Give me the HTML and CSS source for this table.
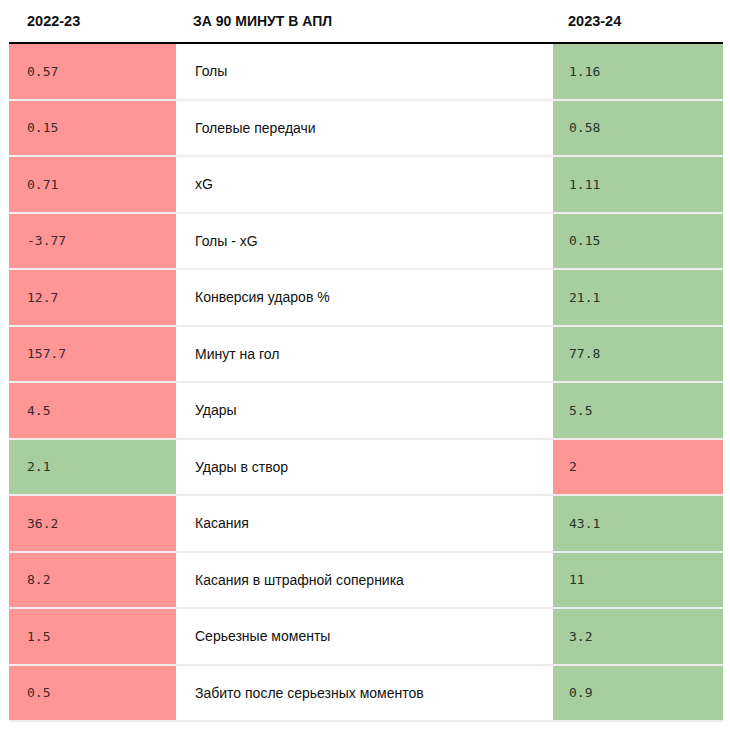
FILE: index.html
```html
<!DOCTYPE html>
<html lang="ru">
<head>
<meta charset="utf-8">
<link rel="stylesheet" href="styles.css">
</head>
<body>
<div class="wrap">
<table class="stats">
  <colgroup>
    <col class="c-left">
    <col class="c-mid">
    <col class="c-right">
  </colgroup>
  <thead>
    <tr>
      <th>2022-23</th>
      <th>ЗА 90 МИНУТ В АПЛ</th>
      <th>2023-24</th>
    </tr>
  </thead>
  <tbody>
    <tr><td class="num bad">0.57</td><td class="lbl">Голы</td><td class="num good">1.16</td></tr>
    <tr><td class="num bad">0.15</td><td class="lbl">Голевые передачи</td><td class="num good">0.58</td></tr>
    <tr><td class="num bad">0.71</td><td class="lbl">xG</td><td class="num good">1.11</td></tr>
    <tr><td class="num bad">-3.77</td><td class="lbl">Голы - xG</td><td class="num good">0.15</td></tr>
    <tr><td class="num bad">12.7</td><td class="lbl">Конверсия ударов %</td><td class="num good">21.1</td></tr>
    <tr><td class="num bad">157.7</td><td class="lbl">Минут на гол</td><td class="num good">77.8</td></tr>
    <tr><td class="num bad">4.5</td><td class="lbl">Удары</td><td class="num good">5.5</td></tr>
    <tr><td class="num good">2.1</td><td class="lbl">Удары в створ</td><td class="num bad">2</td></tr>
    <tr><td class="num bad">36.2</td><td class="lbl">Касания</td><td class="num good">43.1</td></tr>
    <tr><td class="num bad">8.2</td><td class="lbl">Касания в штрафной соперника</td><td class="num good">11</td></tr>
    <tr><td class="num bad">1.5</td><td class="lbl">Серьезные моменты</td><td class="num good">3.2</td></tr>
    <tr><td class="num bad">0.5</td><td class="lbl">Забито после серьезных моментов</td><td class="num good">0.9</td></tr>
  </tbody>
</table>
</div>
</body>
</html>
```

FILE: styles.css
```css
html, body {
  margin: 0;
  padding: 0;
  background: #fff;
}

.wrap {
  padding-left: 9px;
}

.stats {
  width: 714px;
  border-collapse: collapse;
  table-layout: fixed;
  font-family: "Liberation Sans", Arial, sans-serif;
  color: #111;
}

.c-left { width: 167px; }
.c-mid { width: 377px; }
.c-right { width: 170px; }

.stats th {
  height: 42px;
  padding: 0 0 0 18px;
  text-align: left;
  vertical-align: middle;
  font-size: 14.5px;
  font-weight: bold;
  color: #111;
  border-bottom: 2px solid #000;
}

.stats th:nth-child(2) {
  padding-left: 17px;
  font-size: 14px;
}

.stats th:nth-child(3) {
  padding-left: 15px;
}

.stats td {
  box-sizing: border-box;
  height: 56.5px;
  padding: 0 0 0 18px;
  vertical-align: middle;
  border-bottom: 2px solid #ededed;
}

.stats td:nth-child(3) {
  padding-left: 16px;
}

.stats td.num {
  font-family: "DejaVu Sans Mono", "Liberation Mono", monospace;
  font-size: 13px;
  color: #3a2a2a;
}

.stats td.lbl {
  font-size: 14px;
  color: #111;
  padding-left: 19px;
}

.bad {
  background: #ff9696;
}

.good {
  background: #a8cea0;
}

.stats td.good {
  color: #263326;
}
```
